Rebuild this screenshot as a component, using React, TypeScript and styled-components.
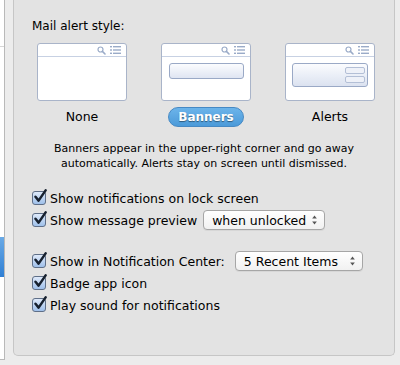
import styled, { createGlobalStyle } from "styled-components"

const GlobalStyle = createGlobalStyle`
  html, body {
    margin: 0;
    padding: 0;
    background: #ececec;
  }
  body {
    font-family: "DejaVu Sans", "Liberation Sans", sans-serif;
    color: #000;
  }
`

type Style = "none" | "banners" | "alerts"

const styles: { id: Style; label: string }[] = [
  { id: "none", label: "None" },
  { id: "banners", label: "Banners" },
  { id: "alerts", label: "Alerts" },
]

export default function App() {
  const selected: Style = "banners"
  return (
    <Window>
      <GlobalStyle />
      <Sidebar>
        <SidebarRule />
        <SidebarSelection />
      </Sidebar>
      <Panel>
        <Title>Mail alert style:</Title>
        <StyleRow>
          {styles.map((s) => (
            <StyleOption key={s.id}>
              <Thumb>
                <ThumbBar>
                  <SearchIcon />
                  <ListIcon />
                </ThumbBar>
                {s.id === "banners" && <BannerShape />}
                {s.id === "alerts" && (
                  <AlertShape>
                    <AlertButton />
                    <AlertButton />
                  </AlertShape>
                )}
              </Thumb>
              <StyleLabel $active={s.id === selected}>{s.label}</StyleLabel>
            </StyleOption>
          ))}
        </StyleRow>
        <Description>
          Banners appear in the upper-right corner and go away
          <br />
          automatically. Alerts stay on screen until dismissed.
        </Description>
        <Options>
          <OptionRow>
            <CheckBox />
            Show notifications on lock screen
          </OptionRow>
          <OptionRow>
            <CheckBox />
            Show message preview
            <Popup $width={122} $gap={6}>
              when unlocked
              <Stepper />
            </Popup>
          </OptionRow>
        </Options>
        <Options>
          <OptionRow>
            <CheckBox />
            Show in Notification Center:
            <Popup $width={128} $gap={10}>
              5 Recent Items
              <Stepper />
            </Popup>
          </OptionRow>
          <OptionRow>
            <CheckBox />
            Badge app icon
          </OptionRow>
          <OptionRow>
            <CheckBox />
            Play sound for notifications
          </OptionRow>
        </Options>
      </Panel>
    </Window>
  )
}

function CheckBox() {
  return (
    <Box>
      <svg width="16" height="16" viewBox="0 0 16 16">
        <path
          d="M3.5 7.8 L6.6 11.6 L13.6 1.4"
          fill="none"
          stroke="#17212f"
          strokeWidth="2.5"
          strokeLinecap="round"
          strokeLinejoin="round"
        />
      </svg>
    </Box>
  )
}

function SearchIcon() {
  return (
    <svg width="9" height="9" viewBox="0 0 9 9">
      <circle cx="3.5" cy="3.5" r="2.5" fill="none" stroke="#9aabc8" strokeWidth="1.2" />
      <path d="M5.4 5.4 L8 8" stroke="#9aabc8" strokeWidth="1.6" strokeLinecap="round" />
    </svg>
  )
}

function ListIcon() {
  return (
    <svg width="11" height="8" viewBox="0 0 11 8">
      <g fill="#9aabc8">
        <rect x="0" y="0" width="2" height="1.4" />
        <rect x="3" y="0" width="8" height="1.4" />
        <rect x="0" y="3.3" width="2" height="1.4" />
        <rect x="3" y="3.3" width="8" height="1.4" />
        <rect x="0" y="6.6" width="2" height="1.4" />
        <rect x="3" y="6.6" width="8" height="1.4" />
      </g>
    </svg>
  )
}

function Stepper() {
  return (
    <Arrows>
      <svg width="7" height="12" viewBox="0 0 7 12">
        <path d="M3.5 1.5 L5.8 4.5 L1.2 4.5 Z" fill="#555" />
        <path d="M3.5 10.5 L5.8 7.5 L1.2 7.5 Z" fill="#555" />
      </svg>
    </Arrows>
  )
}

const Window = styled.div`
  width: 400px;
  height: 365px;
  display: flex;
  align-items: flex-start;
  gap: 8px;
  overflow: hidden;
  background: #ececec;
`

const Sidebar = styled.div`
  width: 4px;
  height: 359px;
  flex-shrink: 0;
  background: #fff;
  border-right: 1px solid #b9b9b9;
  border-bottom: 1px solid #b9b9b9;
  display: flex;
  flex-direction: column;
`

const SidebarRule = styled.div`
  margin-top: 46px;
  height: 1px;
  background: #d6d6d6;
`

const SidebarSelection = styled.div`
  margin-top: 190px;
  height: 40px;
  background: linear-gradient(#6aaae6, #2f7fd4);
`

const Panel = styled.div`
  width: 382px;
  height: 356px;
  flex-shrink: 0;
  box-sizing: border-box;
  background: #e3e3e3;
  border: 1px solid #c6c6c6;
  border-top: none;
  border-radius: 0 0 5px 5px;
  padding: 18px 0 0 18px;
  display: flex;
  flex-direction: column;
`

const Title = styled.div`
  font-size: 12px;
  line-height: 16px;
  height: 16px;
`

const StyleRow = styled.div`
  display: flex;
  gap: 34px;
  margin: 9px 0 0 5px;
`

const StyleOption = styled.div`
  width: 90px;
  display: flex;
  flex-direction: column;
  align-items: center;
  gap: 6px;
`

const Thumb = styled.div`
  width: 90px;
  height: 58px;
  box-sizing: border-box;
  background: #fff;
  border: 1px solid #a9b4c9;
  border-radius: 3px;
  display: flex;
  flex-direction: column;
  align-items: center;
`

const ThumbBar = styled.div`
  align-self: stretch;
  height: 12px;
  border-bottom: 1px solid #c7d1e3;
  display: flex;
  align-items: center;
  justify-content: flex-end;
  gap: 4px;
  padding-right: 5px;
`

const BannerShape = styled.div`
  margin-top: 6px;
  width: 75px;
  height: 16px;
  box-sizing: border-box;
  border: 1px solid #9aa9c6;
  border-radius: 3px;
  background: linear-gradient(#fbfcfe, #dfe5f2);
`

const AlertShape = styled.div`
  margin-top: 6px;
  width: 76px;
  height: 24px;
  box-sizing: border-box;
  border: 1px solid #9aa9c6;
  border-radius: 3px;
  background: linear-gradient(#fbfcfe, #dbe2f0);
  display: flex;
  flex-direction: column;
  align-items: flex-end;
  justify-content: center;
  gap: 2px;
  padding-right: 2px;
`

const AlertButton = styled.div`
  width: 20px;
  height: 7px;
  box-sizing: border-box;
  border: 1px solid #b3bfd6;
  border-radius: 2px;
  background: #eef1f8;
`

const StyleLabel = styled.div<{ $active: boolean }>`
  height: 20px;
  box-sizing: border-box;
  border-radius: 10px;
  font-size: ${(p) => (p.$active ? "12px" : "12.5px")};
  line-height: ${(p) => (p.$active ? "18px" : "20px")};
  font-weight: ${(p) => (p.$active ? 700 : 400)};
  color: ${(p) => (p.$active ? "#fff" : "#000")};
  text-shadow: ${(p) => (p.$active ? "0 1px 1px rgba(0, 0, 0, 0.45)" : "none")};
  background: ${(p) => (p.$active ? "linear-gradient(#6cb4ea, #4b9ad9)" : "none")};
  border: ${(p) => (p.$active ? "1px solid #4689c4" : "none")};
  width: ${(p) => (p.$active ? "76px" : "auto")};
  text-align: center;
`

const Description = styled.div`
  margin: 14px 18px 0 0;
  font-size: 11px;
  line-height: 15px;
  text-align: center;
`

const Options = styled.div`
  margin-top: 16px;
  display: flex;
  flex-direction: column;

  & + & {
    margin-top: 19px;
  }
`

const OptionRow = styled.div`
  height: 22px;
  display: flex;
  align-items: center;
  font-size: 12.5px;
  white-space: nowrap;
`

const Box = styled.span`
  position: relative;
  width: 14px;
  height: 14px;
  margin: 0 4px 0 0;
  flex-shrink: 0;
  box-sizing: border-box;
  border: 1px solid #5f6f88;
  border-radius: 3px;
  background: linear-gradient(#dfeafa, #9fc0ea);

  svg {
    position: absolute;
    left: -1px;
    top: -3px;
  }
`

const Popup = styled.div<{ $width: number; $gap: number }>`
  margin-left: ${(p) => p.$gap}px;
  width: ${(p) => p.$width}px;
  height: 20px;
  box-sizing: border-box;
  display: flex;
  align-items: center;
  justify-content: space-between;
  padding: 0 6px 0 8px;
  background: linear-gradient(#ffffff, #f1f1f1);
  border: 1px solid #a6a6a6;
  border-radius: 4px;
  box-shadow: 0 1px 0 rgba(0, 0, 0, 0.05);
  font-size: 12.5px;
`

const Arrows = styled.span`
  display: flex;
  align-items: center;
`
